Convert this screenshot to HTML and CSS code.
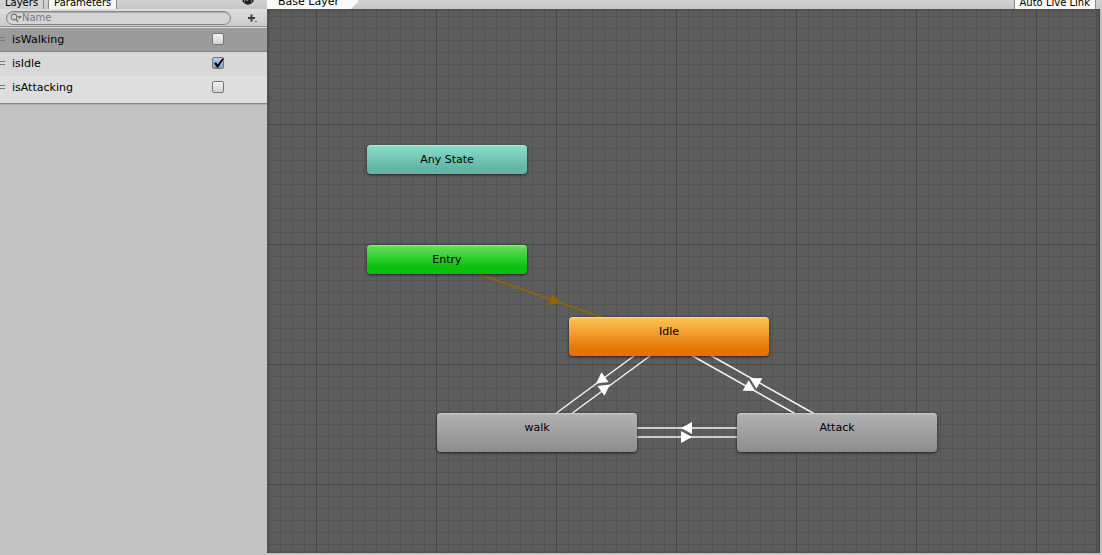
FILE: index.html
```
<!DOCTYPE html>
<html lang="en">
<head>
<meta charset="utf-8">
<title>Animator</title>
<link rel="stylesheet" href="styles.css">
</head>
<body>
<div class="animator">
  <aside class="sidebar">
    <div class="toolbar tabs">
      <button class="tab" type="button">Layers</button>
      <button class="tab active" type="button">Parameters</button>
      <button class="eye" type="button" aria-label="Toggle visibility">
        <svg width="12" height="10" viewBox="0 0 12 10"><path d="M1 5Q6-1 11 5Q6 11 1 5Z" fill="none" stroke="#222" stroke-width="1.4"/><circle cx="6" cy="5" r="3" fill="#222"/><circle cx="5" cy="4" r="1" fill="#aaa"/></svg>
      </button>
    </div>
    <div class="search-row">
      <label class="search">
        <svg width="12" height="10" viewBox="0 0 12 10"><circle cx="4" cy="4" r="2.8" fill="none" stroke="#777" stroke-width="1.2"/><path d="M6 6L8 9" stroke="#777" stroke-width="1.4"/><path d="M7 3H12L9.500 6Z" fill="#777"/></svg>
        <input type="text" placeholder="Name" aria-label="Name">
      </label>
      <button class="add" type="button" aria-label="Add parameter">
        <svg width="10" height="10" viewBox="0 0 10 10"><path d="M1 5H8M4.500 1.500V8.500" stroke="#3c3c3c" stroke-width="2"/><path d="M8 8.500H10" stroke="#666"/></svg>
      </button>
    </div>
    <ul class="params">
      <li class="param selected"><span class="grip"></span><label for="p1">isWalking</label><input id="p1" type="checkbox"></li>
      <li class="param"><span class="grip"></span><label for="p2">isIdle</label><input id="p2" type="checkbox" checked></li>
      <li class="param"><span class="grip"></span><label for="p3">isAttacking</label><input id="p3" type="checkbox"></li>
    </ul>
  </aside>
  <main class="main">
    <div class="toolbar">
      <button class="crumb" type="button">Base Layer</button>
      <button class="live" type="button">Auto Live Link</button>
    </div>
    <div class="graph">
      <svg class="edges" aria-hidden="true">
        <defs><path id="arrow" d="M-5-6L6 0L-5 6Z"/></defs>
        <g stroke="#966400" fill="#966400">
          <path d="M180 254L374 322" stroke-width="1.500"/>
          <use href="#arrow" transform="translate(288 292) rotate(19)"/>
        </g>
        <g stroke="#f4f4f4" stroke-width="1.500">
          <path d="M375 341L284 408M391 341L300 408M415 341L534 408M434 341L553 408M370 419H470M370 428H470"/>
        </g>
        <g fill="#fff">
          <use href="#arrow" transform="translate(334 371) rotate(144)"/>
          <use href="#arrow" transform="translate(338 379) rotate(-36)"/>
          <use href="#arrow" transform="translate(483 379) rotate(30)"/>
          <use href="#arrow" transform="translate(488 372) rotate(210)"/>
          <use href="#arrow" transform="translate(420 419) rotate(180)"/>
          <use href="#arrow" transform="translate(419 428)"/>
        </g>
      </svg>
      <div class="node any">Any State</div>
      <div class="node entry">Entry</div>
      <div class="node state idle">Idle</div>
      <div class="node state walk">walk</div>
      <div class="node state attack">Attack</div>
    </div>
  </main>
</div>
</body>
</html>
```
FILE: styles.css
```
* { box-sizing: border-box; }
body {
  margin: 0;
  background: #c2c2c2;
  color: #000;
  font: 11px/14px "DejaVu Sans", sans-serif;
}
button, input { font: inherit; color: inherit; margin: 0; }
button { padding: 0; border: 0; background: none; white-space: nowrap; }
svg { display: block; flex: none; }
.animator { display: flex; height: 100vh; }
.sidebar { flex: none; width: 267px; }
.main { flex: 1; min-width: 0; display: flex; flex-direction: column; }

.toolbar {
  display: flex;
  align-items: flex-end;
  height: 9px;
  background: linear-gradient(#d4d4d4, #c6c6c6);
}
.tab, .live { height: 13px; padding: 0 5px; font-size: 10px; }
.tab { border-right: 1px solid #888; background: #d2d2d2; }
.tab.active { margin-left: 4px; border-left: 1px solid #888; background: #f6f6f6; }
.eye { margin: 0 13px 3px auto; }
.crumb {
  height: 14px;
  padding: 0 19px 0 11px;
  background: #fafafa;
  clip-path: polygon(0 0, 100% 0, 100% 50%, calc(100% - 7px) 100%, 0 100%);
}
.live {
  margin: 0 6px 0 auto;
  border: solid #888;
  border-width: 0 1px;
  background: #f8f8f8;
}

.search-row {
  display: flex;
  align-items: center;
  height: 18px;
  padding-left: 6px;
  border-bottom: 1px solid #909090;
  background: linear-gradient(#dedede, #cbcbcb);
}
.search {
  display: flex;
  align-items: center;
  width: 225px;
  height: 14px;
  padding-left: 3px;
  border: 1px solid #858585;
  border-radius: 7px;
  background: #d5d5d5;
  box-shadow: inset 0 1px 1px #aaa;
}
.search input {
  flex: 1;
  min-width: 0;
  height: 12px;
  padding: 0;
  border: 0;
  outline: 0;
  background: none;
  font-size: 10px;
}
.search input::placeholder { color: #777; opacity: 1; }
.add { margin-left: 16px; }

.params {
  margin: 0;
  padding: 1px 0 3px;
  list-style: none;
  background: #dedede;
  border-bottom: 1px solid #858585;
  box-shadow: 0 1px 0 #aaa;
}
.param {
  display: flex;
  align-items: center;
  height: 24px;
  padding-bottom: 2px;
  background: #dedede;
}
.param:nth-child(2) { background: #d8d8d8; }
.param.selected { padding-bottom: 1px; background: #9b9b9b; border-bottom: 1px solid #828282; }
.grip { width: 5px; height: 4px; margin-right: 7px; border: solid #777; border-width: 1px 0; }
.param label { width: 200px; padding-top: 2px; }
.param input {
  appearance: none;
  width: 12px;
  height: 12px;
  border: 1px solid #777;
  border-radius: 2px;
  background: linear-gradient(#f2f2f2, #d2d2d2);
}
.param input:checked { background: linear-gradient(#b5cbea, #7fa1d4); }
.param input:checked::after {
  content: "";
  display: block;
  width: 11px;
  height: 10px;
  background: #000;
  clip-path: polygon(10% 50%, 28% 42%, 42% 65%, 84% 5%, 100% 5%, 48% 95%, 34% 95%);
}

.graph {
  position: relative;
  flex: 1;
  margin: 0 2px 2px 0;
  overflow: hidden;
  border-right: 1px solid #444;
  background-color: #5d5d5d;
  background-image:
    linear-gradient(90deg, #464646 1px, transparent 1px),
    linear-gradient(#464646 1px, transparent 1px),
    linear-gradient(90deg, #535353 1px, transparent 1px),
    linear-gradient(#535353 1px, transparent 1px);
  background-size: 120px 120px, 120px 120px, 12px 12px, 12px 12px;
  background-position: 49px 0, 0 115px, 1px 0, 0 7px;
}
.graph::after {
  content: "";
  position: absolute;
  inset: 0;
  box-shadow: inset 0 0 4px #444;
}
.edges { position: absolute; inset: 0; width: 100%; height: 100%; }
.edges use { stroke: none; }
.node {
  position: absolute;
  width: 160px;
  height: 29px;
  padding-top: 8px;
  border-radius: 4px;
  text-align: center;
  box-shadow: inset 0 1px 0 #ffffff55, 0 1px 3px #000000aa;
}
.state { width: 200px; height: 39px; }
.any { left: 100px; top: 136px; background: linear-gradient(#8cdeca, #62b6a8 80%); }
.entry { left: 100px; top: 236px; background: linear-gradient(#6be05f, #0bc010 75%); }
.idle { left: 302px; top: 308px; background: linear-gradient(#ffc65a, #e67300 85%); }
.walk { left: 170px; top: 404px; background: linear-gradient(#b3b3b3, #8c8c8c); }
.attack { left: 470px; top: 404px; background: linear-gradient(#b3b3b3, #8c8c8c); }
```
